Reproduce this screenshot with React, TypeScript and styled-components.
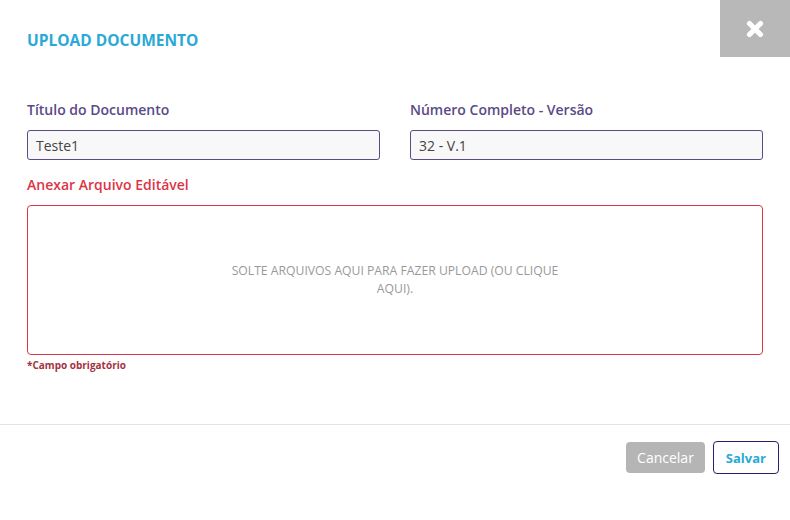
import React from "react";
import styled, { createGlobalStyle } from "styled-components";

const Global = createGlobalStyle`
  html, body { margin: 0; padding: 0; background: #fff; }
  body { font-family: "Open Sans", "Liberation Sans", sans-serif; }
  * { box-sizing: border-box; }
`;

const Modal = styled.div`
  width: 790px;
  height: 520px;
  background: #fff;
  display: flex;
  flex-direction: column;
`;

const Header = styled.header`
  display: flex;
  justify-content: space-between;
  align-items: flex-start;
  height: 57px;
`;

const Title = styled.h1`
  margin: 0;
  padding: 30px 0 0 27px;
  font-size: 15.5px;
  line-height: 21px;
  font-weight: 700;
  color: #2aa9d6;
`;

const CloseButton = styled.button`
  width: 70px;
  height: 57px;
  border: 0;
  padding: 0;
  background: #b8b8b8;
  display: flex;
  align-items: center;
  justify-content: center;
  cursor: pointer;
`;

const Body = styled.div`
  padding: 0 27px;
  flex: 1;
`;

const Row = styled.div`
  display: grid;
  grid-template-columns: 1fr 1fr;
  column-gap: 30px;
  margin-top: 43px;
`;

const Field = styled.div`
  display: flex;
  flex-direction: column;
`;

const Label = styled.label<{ $error?: boolean }>`
  font-size: 14px;
  line-height: 19px;
  font-weight: 600;
  color: ${(p) => (p.$error ? "#dc3545" : "#5a4a86")};
  margin-bottom: 11px;
`;

const Input = styled.div`
  height: 30px;
  border: 1px solid #5a4a86;
  border-radius: 3px;
  background: #f8f8f8;
  padding: 0 8px;
  font-size: 14px;
  color: #444;
  display: flex;
  align-items: center;
`;

const AttachLabel = styled(Label)`
  display: block;
  margin-top: 15px;
  margin-bottom: 11px;
`;

const DropZone = styled.div`
  height: 150px;
  border: 1px solid #dc3545;
  border-radius: 4px;
  display: flex;
  align-items: center;
  justify-content: center;
`;

const DropText = styled.p`
  margin: 0;
  max-width: 340px;
  text-align: center;
  font-size: 12.2px;
  line-height: 18px;
  color: #999;
  text-transform: uppercase;
`;

const Hint = styled.div`
  margin-top: 3px;
  font-size: 10px;
  line-height: 14px;
  font-weight: 700;
  color: #a6333f;
`;

const Footer = styled.footer`
  border-top: 1px solid #e3e3e3;
  height: 96px;
  display: flex;
  justify-content: flex-end;
  align-items: flex-start;
  gap: 8px;
  padding: 16px 11px 0 0;
`;

const Button = styled.button<{ $primary?: boolean }>`
  font-family: "Open Sans", "Liberation Sans", sans-serif;
  font-size: ${(p) => (p.$primary ? "13px" : "14px")};
  font-weight: ${(p) => (p.$primary ? 700 : 400)};
  height: ${(p) => (p.$primary ? "33px" : "31px")};
  margin-top: ${(p) => (p.$primary ? "0" : "1px")};
  padding: 0 ${(p) => (p.$primary ? "12px" : "11px")};
  border-radius: 4px;
  border: ${(p) => (p.$primary ? "1px solid #2e1b6b" : "0")};
  background: ${(p) => (p.$primary ? "#fff" : "#b5b5b5")};
  color: ${(p) => (p.$primary ? "#2aa9d6" : "#fff")};
  cursor: pointer;
`;

const CloseIcon = () => (
  <svg width="18" height="18" viewBox="0 0 18 18" aria-hidden>
    <path
      d="M3.5 3.5 L14.5 14.5 M14.5 3.5 L3.5 14.5"
      stroke="#fff"
      strokeWidth="5.2"
      strokeLinecap="round"
    />
  </svg>
);

export default function App() {
  return (
    <>
      <Global />
      <Modal>
        <Header>
          <Title>UPLOAD DOCUMENTO</Title>
          <CloseButton aria-label="Fechar">
            <CloseIcon />
          </CloseButton>
        </Header>
        <Body>
          <Row>
            <Field>
              <Label>Título do Documento</Label>
              <Input>Teste1</Input>
            </Field>
            <Field>
              <Label>Número Completo - Versão</Label>
              <Input>32 - V.1</Input>
            </Field>
          </Row>
          <AttachLabel $error>Anexar Arquivo Editável</AttachLabel>
          <DropZone>
            <DropText>Solte arquivos aqui para fazer upload (ou clique aqui).</DropText>
          </DropZone>
          <Hint>*Campo obrigatório</Hint>
        </Body>
        <Footer>
          <Button>Cancelar</Button>
          <Button $primary>Salvar</Button>
        </Footer>
      </Modal>
    </>
  );
}
